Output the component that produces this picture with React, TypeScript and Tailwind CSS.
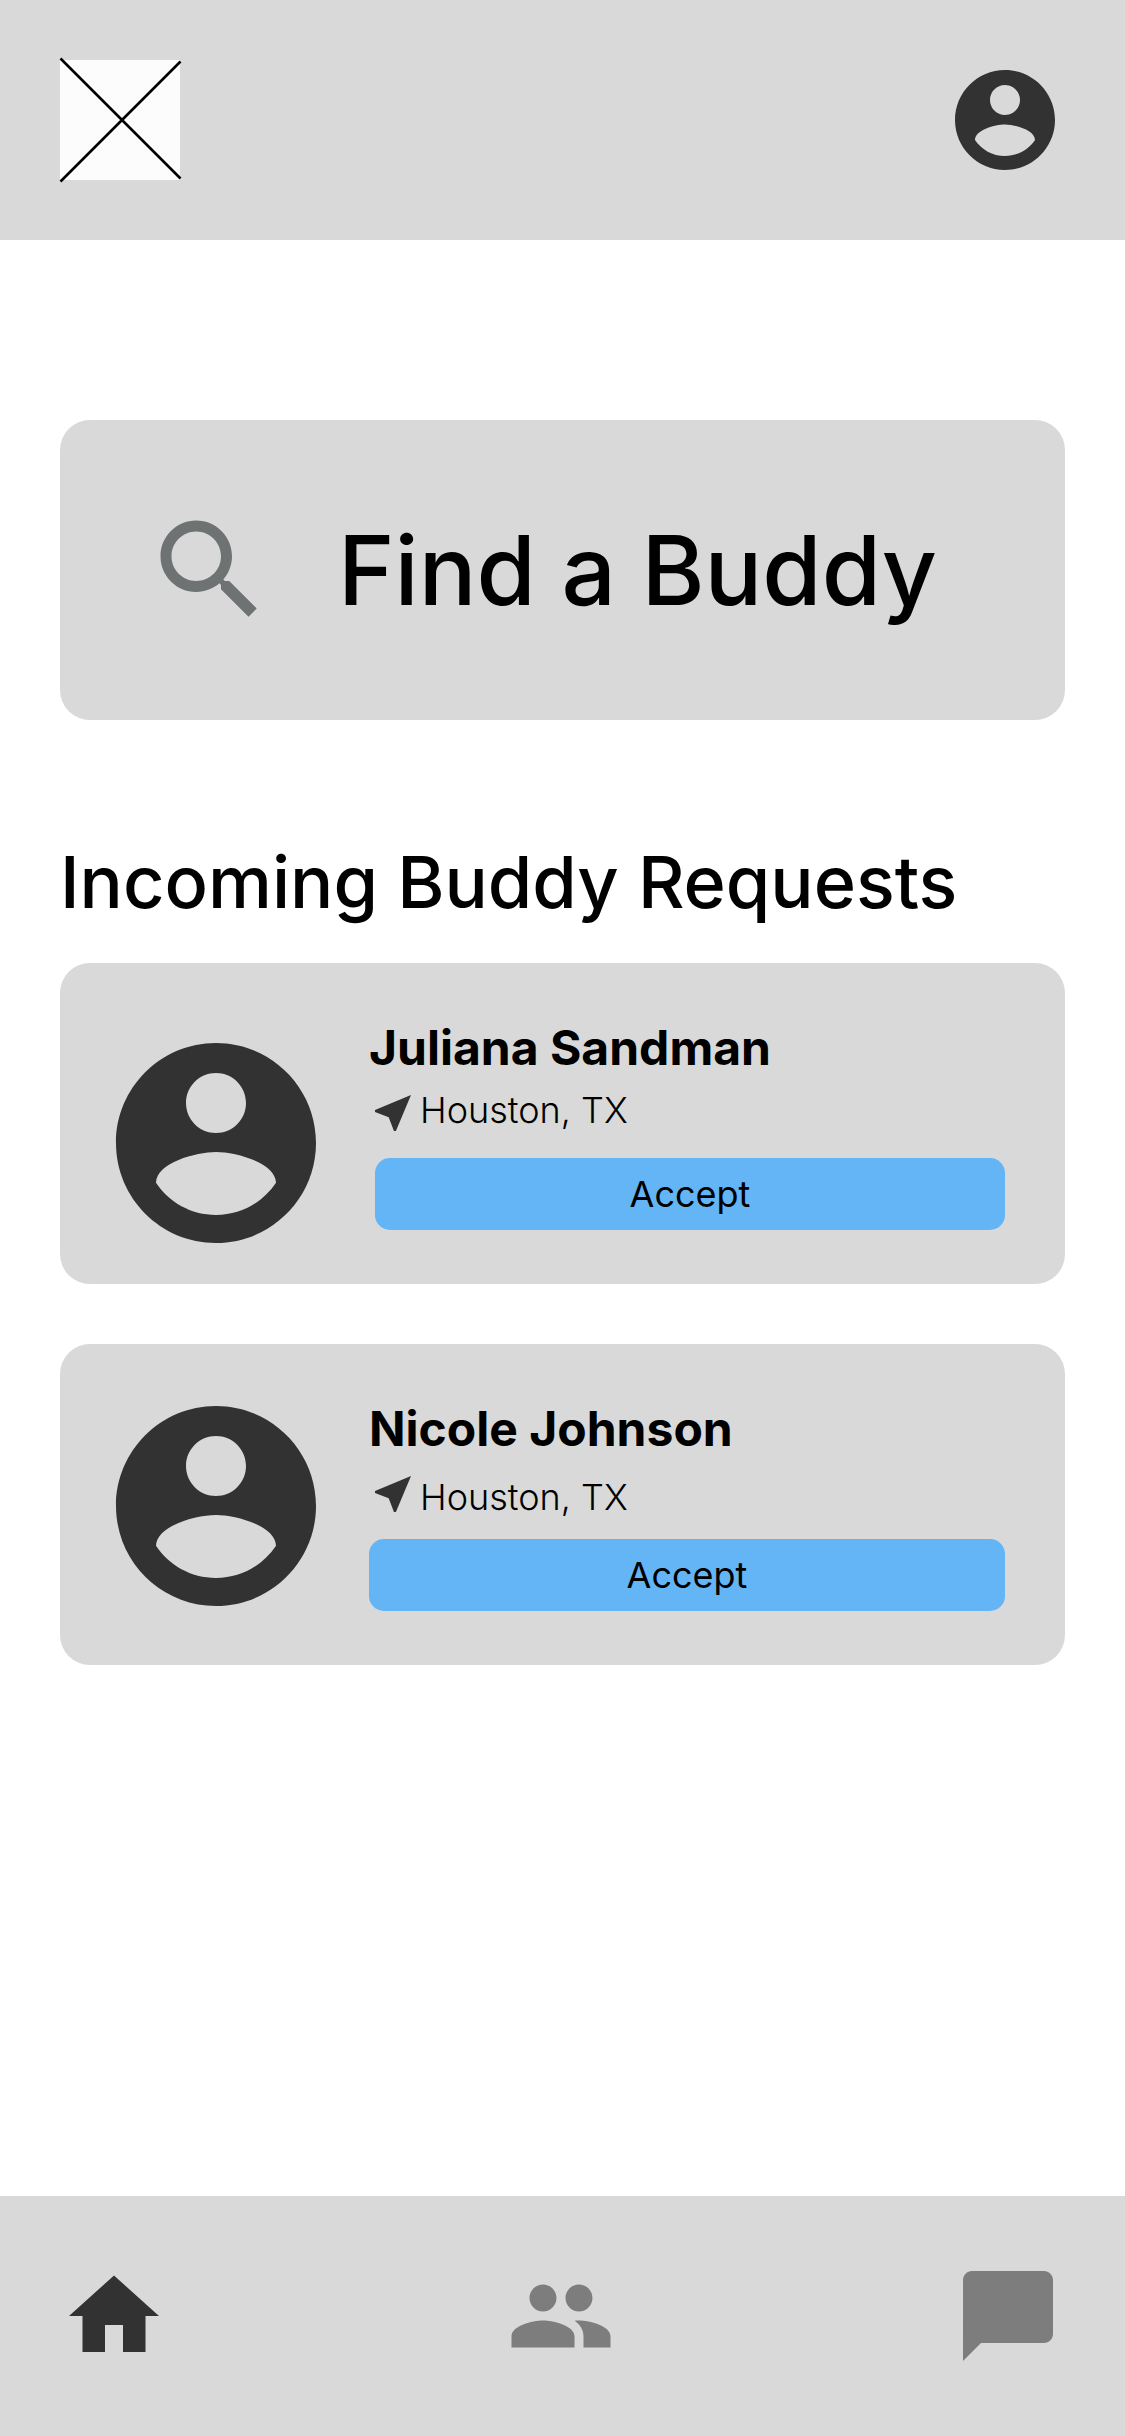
import clsx from "clsx";

const ICONS = {
  account:
    "M12 2C6.48 2 2 6.48 2 12s4.48 10 10 10 10-4.48 10-10S17.52 2 12 2zm0 3c1.66 0 3 1.34 3 3s-1.34 3-3 3-3-1.34-3-3 1.34-3 3-3zm0 14.2c-2.5 0-4.71-1.28-6-3.22.03-1.99 4-3.08 6-3.08 1.99 0 5.97 1.09 6 3.08-1.29 1.94-3.5 3.22-6 3.22z",
  search:
    "M15.5 14h-.79l-.28-.27C15.41 12.59 16 11.11 16 9.5 16 5.91 13.09 3 9.5 3S3 5.91 3 9.5 5.91 16 9.5 16c1.61 0 3.09-.59 4.23-1.57l.27.28v.79l5 4.99L20.49 19l-4.99-5zm-6 0C7.01 14 5 11.99 5 9.5S7.01 5 9.5 5 14 7.01 14 9.5 11.99 14 9.5 14z",
  nearMe: "M21 3L3 10.53v.98l6.84 2.65L12.48 21h.98L21 3z",
  home: "M10 20v-6h4v6h5v-8h3L12 3 2 12h3v8z",
  people:
    "M16 11c1.66 0 2.99-1.34 2.99-3S17.66 5 16 5c-1.66 0-3 1.34-3 3s1.34 3 3 3zm-8 0c1.66 0 2.99-1.34 2.99-3S9.66 5 8 5C6.34 5 5 6.34 5 8s1.34 3 3 3zm0 2c-2.33 0-7 1.17-7 3.5V19h14v-2.5c0-2.33-4.67-3.5-7-3.5zm8 0c-.29 0-.62.02-.97.05 1.16.84 1.97 1.97 1.97 3.45V19h6v-2.5c0-2.33-4.67-3.5-7-3.5z",
  chat: "M20 2H4c-1.1 0-1.99.9-1.99 2L2 22l4-4h14c1.1 0 2-.9 2-2V4c0-1.1-.9-2-2-2z",
};

interface IconProps {
  name: keyof typeof ICONS;
  className?: string;
}

function Icon({ name, className }: IconProps) {
  return (
    <svg
      viewBox="0 0 24 24"
      fill="currentColor"
      aria-hidden="true"
      className={clsx("shrink-0", className)}
    >
      <path d={ICONS[name]} />
    </svg>
  );
}

interface BuddyRequest {
  name: string;
  location: string;
  avatarClass: string;
  locationClass: string;
  buttonClass: string;
}

const requests: BuddyRequest[] = [
  {
    name: "Juliana Sandman",
    location: "Houston, TX",
    avatarClass: "mt-[60px]",
    locationClass: "items-start",
    buttonClass: "ml-1.5",
  },
  {
    name: "Nicole Johnson",
    location: "Houston, TX",
    avatarClass: "mt-[42px]",
    locationClass: "items-end",
    buttonClass: "ml-0",
  },
];

function RequestCard({ request }: { request: BuddyRequest }) {
  return (
    <li className="flex items-start gap-[33px] rounded-[30px] bg-[#d9d9d9] pl-9 pr-[60px]">
      <Icon
        name="account"
        className={clsx("size-60 text-[#323232]", request.avatarClass)}
      />
      <div className="flex flex-1 flex-col pt-14 pb-[54px]">
        <h3 className="text-[48px] leading-[58px] font-bold">{request.name}</h3>
        <div className={clsx("mt-3 flex gap-[3px]", request.locationClass)}>
          <Icon name="nearMe" className="size-12 text-[#323232]" />
          <p className="text-[36px] leading-[42px] font-light">
            {request.location}
          </p>
        </div>
        <button
          type="button"
          className={clsx(
            "mt-[21px] h-[72px] rounded-[15px] bg-[#64b5f6] text-[36px] leading-[42px]",
            request.buttonClass
          )}
        >
          Accept
        </button>
      </div>
    </li>
  );
}

export default function App() {
  return (
    <div className="flex min-h-screen flex-col bg-white font-['Inter',sans-serif] text-black">
      <header className="flex items-center justify-between bg-[#d9d9d9] p-[60px]">
        <a href="#" aria-label="Logo">
          <svg viewBox="0 0 120 120" className="size-[120px] overflow-visible">
            <rect width="120" height="120" fill="#fcfcfc" />
            <path
              d="M0.5 -1.5L120.5 118.5M0.5 121.5L120.5 1.5"
              stroke="#000"
              strokeWidth="2.6"
            />
          </svg>
        </a>
        <button type="button" aria-label="Account">
          <Icon name="account" className="size-[120px] text-[#323232]" />
        </button>
      </header>

      <main className="flex-1 px-[60px] pt-[180px] pb-[60px]">
        <button
          type="button"
          className="flex h-[300px] w-full items-center gap-[62px] rounded-[30px] bg-[#d9d9d9] px-[84px]"
        >
          <Icon name="search" className="size-[132px] text-[#6e7272]" />
          <span className="text-[96px] leading-[117px] font-medium">
            Find a Buddy
          </span>
        </button>

        <section>
          <h2 className="mt-[118px] mb-[38px] text-[72px] leading-[87px] font-medium">
            Incoming Buddy Requests
          </h2>
          <ul className="flex flex-col gap-[60px]">
            {requests.map((request) => (
              <RequestCard key={request.name} request={request} />
            ))}
          </ul>
        </section>
      </main>

      <nav className="flex h-60 items-center justify-between bg-[#d9d9d9] pr-[63px] pl-[60px] text-[#7d7d7d]">
        <a href="#home" aria-label="Home" className="text-[#323232]">
          <Icon name="home" className="size-[108px]" />
        </a>
        <a href="#buddies" aria-label="Buddies">
          <Icon name="people" className="size-[108px]" />
        </a>
        <a href="#messages" aria-label="Messages">
          <Icon name="chat" className="size-[108px]" />
        </a>
      </nav>
    </div>
  );
}
